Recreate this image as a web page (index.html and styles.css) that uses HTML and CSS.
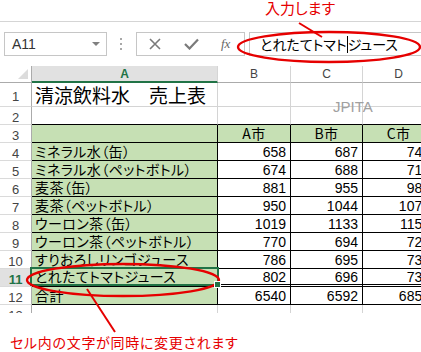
FILE: index.html
```html
<!DOCTYPE html>
<html lang="ja">
<head>
    <meta charset="UTF-8">
    <title>清涼飲料水 売上表</title>
    <link rel="stylesheet" href="styles.css">
</head>
<body>
<div class="page">
    <div class="top"><span class="callout">入力します</span></div>

    <!-- formula bar -->
    <div class="fbar">
        <div class="namebox"><span>A11</span><span class="drop"></span></div>
        <div class="grip"><i></i><i></i><i></i></div>
        <div class="btns">
            <svg class="ico-x" width="12" height="12" viewBox="0 0 12 12"><path d="M1 1 L11 11 M11 1 L1 11" stroke="#7a7a7a" stroke-width="1.6" fill="none"/></svg>
            <svg class="ico-ok" width="15" height="12" viewBox="0 0 15 12"><path d="M1 6 L5.5 10.5 L14 1.5" stroke="#7a7a7a" stroke-width="2.2" fill="none"/></svg>
            <span class="fx">fx</span>
        </div>
        <div class="entry">とれたてトマト<span class="caret"></span>ジュース</div>
    </div>

    <!-- sheet -->
    <div class="sheet">
        <div class="grid">
            <div class="corner"></div>
            <div class="ch sel">A</div>
            <div class="ch">B</div>
            <div class="ch">C</div>
            <div class="ch">D</div>

            <div class="rh">1</div>
            <div class="c title">清涼飲料水　売上表</div>
            <div class="c"></div><div class="c"></div><div class="c"></div>

            <div class="rh">2</div>
            <div class="c bt"></div><div class="c bt"></div><div class="c bt"></div><div class="c bt"></div>

            <div class="rh">3</div>
            <div class="c g b"></div>
            <div class="c g b mid">A市</div>
            <div class="c g b mid">B市</div>
            <div class="c g b mid">C市</div>

            <div class="rh">4</div>
            <div class="c g b">ミネラル水（缶）</div>
            <div class="c b num">658</div><div class="c b num">687</div><div class="c b num">741</div>

            <div class="rh">5</div>
            <div class="c g b">ミネラル水（ペットボトル）</div>
            <div class="c b num">674</div><div class="c b num">688</div><div class="c b num">712</div>

            <div class="rh">6</div>
            <div class="c g b">麦茶（缶）</div>
            <div class="c b num">881</div><div class="c b num">955</div><div class="c b num">982</div>

            <div class="rh">7</div>
            <div class="c g b">麦茶（ペットボトル）</div>
            <div class="c b num">950</div><div class="c b num">1044</div><div class="c b num">1072</div>

            <div class="rh">8</div>
            <div class="c g b">ウーロン茶（缶）</div>
            <div class="c b num">1019</div><div class="c b num">1133</div><div class="c b num">1150</div>

            <div class="rh">9</div>
            <div class="c g b">ウーロン茶（ペットボトル）</div>
            <div class="c b num">770</div><div class="c b num">694</div><div class="c b num">725</div>

            <div class="rh">10</div>
            <div class="c g b">すりおろしリンゴジュース</div>
            <div class="c b num">786</div><div class="c b num">695</div><div class="c b num">731</div>

            <div class="rh sel">11</div>
            <div class="c g b dbl cur">とれたてトマトジュース</div>
            <div class="c b dbl num">802</div><div class="c b dbl num">696</div><div class="c b dbl num">738</div>

            <div class="rh">12</div>
            <div class="c g b">合計</div>
            <div class="c b num">6540</div><div class="c b num">6592</div><div class="c b num">6851</div>

            <div class="rh">13</div>
            <div class="c"></div><div class="c"></div><div class="c"></div><div class="c"></div>
        </div>
        <div class="mark">JPITA</div>
    </div>

    <p class="note">セル内の文字が同時に変更されます</p>

    <!-- red callout marks -->
    <svg class="marks" width="421" height="352" viewBox="0 0 421 352">
        <ellipse cx="329" cy="47" rx="91" ry="15" fill="none" stroke="#e60000" stroke-width="2.4"/>
        <line x1="299" y1="23" x2="322" y2="37" stroke="#e60000" stroke-width="2"/>
        <ellipse cx="123" cy="280" rx="96" ry="16" fill="none" stroke="#e60000" stroke-width="2.4"/>
        <line x1="87" y1="289" x2="115" y2="332" stroke="#e60000" stroke-width="2"/>
    </svg>
</div>
</body>
</html>
```

FILE: styles.css
```css
body {
    margin: 0;
    background: #fff;
    font-family: "Noto Sans CJK JP", sans-serif;
}
.page {
    position: relative;
    width: 421px;
    height: 352px;
    overflow: hidden;
}
.top {
    height: 21px;
    border-bottom: 1px solid #d5d5d5;
    padding-left: 265px;
}
.callout {
    display: block;
    color: #e60000;
    font-size: 15px;
    line-height: 15px;
    font-feature-settings: "palt";
}

/* formula bar */
.fbar {
    height: 44px;
    display: flex;
    align-items: center;
}
.namebox {
    box-sizing: border-box;
    margin-left: 4px;
    width: 103px;
    height: 24px;
    border: 1px solid #c6c6c6;
    display: flex;
    align-items: center;
    justify-content: space-between;
    padding: 0 6px 0 7px;
    font: 14px "Liberation Sans", sans-serif;
    color: #333;
}
.drop {
    border-top: 4px solid #808080;
    border-left: 4px solid transparent;
    border-right: 4px solid transparent;
}
.grip {
    margin-left: 13px;
    display: flex;
    flex-direction: column;
    gap: 3px;
}
.grip i {
    display: block;
    width: 2px;
    height: 2px;
    background: #a8a8a8;
}
.btns {
    box-sizing: border-box;
    margin-left: 14px;
    width: 109px;
    height: 24px;
    border: 1px solid #c6c6c6;
    display: flex;
    align-items: center;
    padding-left: 12px;
}
.ico-ok {
    margin-left: 23px;
}
.fx {
    margin-left: 22px;
    font: italic 13px "Liberation Serif", serif;
    color: #666;
}
.entry {
    box-sizing: border-box;
    margin-left: 4px;
    flex: 1;
    height: 24px;
    border: 1px solid #c6c6c6;
    border-right: none;
    padding-left: 10px;
    font-size: 14px;
    line-height: 22px;
    font-feature-settings: "palt";
    color: #000;
    white-space: nowrap;
}
.caret {
    display: inline-block;
    width: 1px;
    height: 17px;
    background: #000;
    vertical-align: -3px;
}

/* sheet */
.sheet {
    position: relative;
    height: 247px;
    overflow: hidden;
}
.grid {
    display: grid;
    grid-template-columns: 32px 186px 73px 72px 72px;
    grid-template-rows: 17px 24px repeat(12, 18px);
    width: 435px;
}
.grid > div {
    box-sizing: border-box;
    display: flex;
    align-items: center;
    overflow: visible;
    white-space: nowrap;
}
.corner {
    border-right: 1px solid #ababab;
    border-bottom: 1px solid #ababab;
    justify-content: flex-end;
    align-items: flex-end !important;
    padding: 0 3px 3px 0;
}
.corner::after {
    content: "";
    border-left: 10px solid transparent;
    border-bottom: 10px solid #dcdcdc;
}
.ch {
    justify-content: center;
    border-right: 1px solid #d5d5d5;
    border-bottom: 1px solid #ababab;
    font: 12px "Liberation Sans", sans-serif;
    color: #444;
}
.ch.sel {
    background: #e1e1e1;
    border-bottom: 2px solid #217346;
    color: #217346;
    font-weight: bold;
}
.rh {
    justify-content: center;
    border-right: 1px solid #ababab;
    border-bottom: 1px solid #dadada;
    font: 13px "Liberation Sans", sans-serif;
    color: #444;
    padding-top: 3px;
}
.rh.sel {
    background: #e1e1e1;
    color: #217346;
    font-weight: bold;
}
.c {
    border-right: 1px solid #d4d4d4;
    border-bottom: 1px solid #d4d4d4;
    padding: 0 0 1px 3px;
    font-size: 14px;
    line-height: 16px;
    letter-spacing: 0.4px;
    font-feature-settings: "palt";
    color: #000;
}
.title {
    font-size: 19px;
    line-height: 24px;
    letter-spacing: 0;
    padding-bottom: 0;
}
.g {
    background: #c6e0b4;
}
.b {
    border-right-color: #000;
    border-bottom-color: #000;
}
.bt {
    border-bottom-color: #000;
}
.dbl {
    border-bottom: 3px double #000;
}
.mid {
    justify-content: center;
    padding-left: 0;
}
.num {
    justify-content: flex-end;
    padding: 0 4px 0 0;
    font: 14px "Liberation Sans", sans-serif;
    letter-spacing: 0;
}
.cur {
    position: relative;
}
.cur::after {
    content: "";
    position: absolute;
    left: -2px;
    top: -2px;
    right: -2px;
    bottom: -2px;
    border: 2px solid #217346;
}
.cur::before {
    content: "";
    position: absolute;
    right: -4px;
    bottom: -4px;
    width: 5px;
    height: 5px;
    background: #217346;
    border: 1px solid #fff;
    z-index: 1;
}
.mark {
    position: absolute;
    left: 333px;
    top: 32px;
    font: 15px "Liberation Sans", sans-serif;
    color: #a0a0a0;
}

.note {
    margin: 0;
    padding: 20px 0 0 10px;
    font-size: 14px;
    line-height: 18px;
    letter-spacing: 0.7px;
    color: #e60000;
    font-feature-settings: "palt";
}
.marks {
    position: absolute;
    left: 0;
    top: 0;
    pointer-events: none;
}
```
